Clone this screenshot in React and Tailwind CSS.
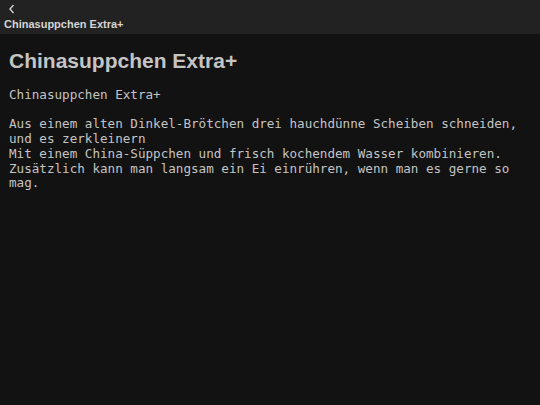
export default function App() {
  return (
    <div className="w-[540px] h-[405px] bg-[#121212] flex flex-col overflow-hidden">
      <div className="h-[34px] bg-[#222222] flex flex-col px-[4px] pt-[3px] shrink-0">
        <svg width="10" height="12" viewBox="0 0 10 12" className="ml-[3px]">
          <path d="M6.5 2 L3 6 L6.5 10" stroke="#cfcfcf" strokeWidth="1.4" fill="none" />
        </svg>
        <div className="text-[11px] font-bold text-[#d4d4d4] leading-[14px] mt-[2px]" style={{ fontFamily: '"Liberation Sans", Arial, sans-serif' }}>
          Chinasuppchen Extra+
        </div>
      </div>
      <div className="px-[9px] pt-[14px] text-[#c4c4c4]">
        <h1 className="text-[21px] font-bold leading-[26px]" style={{ fontFamily: '"Liberation Sans", Arial, sans-serif' }}>
          Chinasuppchen Extra+
        </h1>
        <div className="mt-[14px] text-[12.6px] leading-[14.7px] whitespace-pre-wrap" style={{ fontFamily: '"DejaVu Sans Mono", monospace' }}>
          <p>Chinasuppchen Extra+</p>
          <p className="mt-[14.7px]">Aus einem alten Dinkel-Brötchen drei hauchdünne Scheiben schneiden,{"\n"}und es zerkleinern{"\n"}Mit einem China-Süppchen und frisch kochendem Wasser kombinieren.{"\n"}Zusätzlich kann man langsam ein Ei einrühren, wenn man es gerne so{"\n"}mag.</p>
        </div>
      </div>
    </div>
  );
}
